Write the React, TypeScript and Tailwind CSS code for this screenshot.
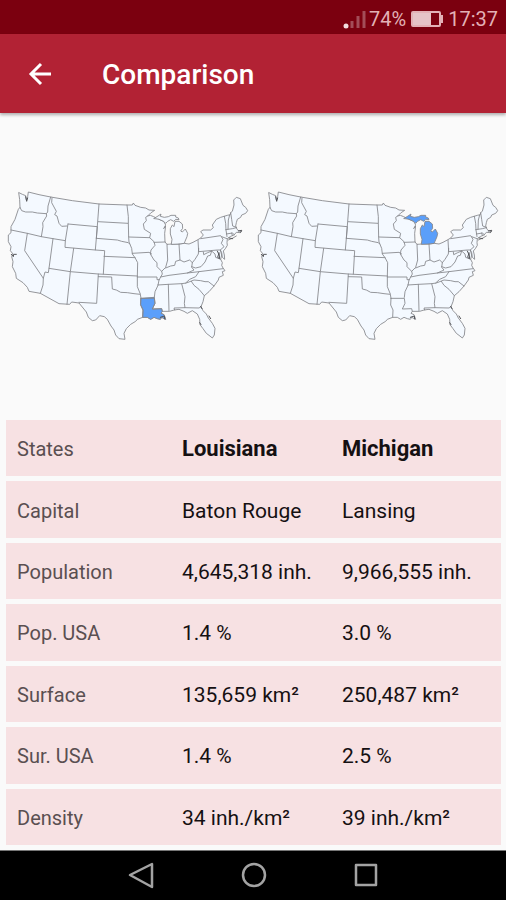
import React from 'react';

type StateCode = 'LA' | 'MI';

interface ComparisonRow {
  label: string;
  left: string;
  right: string;
}

const rows: ComparisonRow[] = [
  { label: 'Capital', left: 'Baton Rouge', right: 'Lansing' },
  { label: 'Population', left: '4,645,318 inh.', right: '9,966,555 inh.' },
  { label: 'Pop. USA', left: '1.4 %', right: '3.0 %' },
  { label: 'Surface', left: '135,659 km²', right: '250,487 km²' },
  { label: 'Sur. USA', left: '1.4 %', right: '2.5 %' },
  { label: 'Density', left: '34 inh./km²', right: '39 inh./km²' },
];

const COUNTRY =
  'M60 38L70 43L80 47L82 60L86 50L88 36L120 44L155 51L220 62L300 72L384 75L400 75L403 69L408 76L425 82L440 84L450 90L467 91L455 99L446 108L454 106L464 110L480 118L494 124L500 135L494 146L500 138L497 160L498 186L504 193L518 192L540 192L556 190L570 192L582 187L595 180L605 174L613 165L605 155L612 150L635 150L643 143L640 135L652 118L665 112L685 106L694 104L695 98L700 94L705 75L704 60L712 52L724 56L732 76L740 82L746 92L740 100L728 105L725 112L715 118L712 128L710 138L714 148L720 153L728 152L724 158L712 157L705 165L695 169L685 176L684 188L685 196L679 206L673 213L676 225L677 238L670 232L668 218L664 210L668 225L665 238L670 248L668 256L672 264L678 272L670 275L673 286L660 292L658 300L645 318L630 335L616 347L612 365L606 380L612 392L622 402L628 414L640 430L648 445L646 465L640 474L630 466L622 460L612 446L603 434L602 418L595 402L580 392L565 400L555 394L540 388L525 390L512 394L490 394L486 400L495 404L500 418L488 412L484 418L475 416L465 412L455 418L445 412L431 412L415 418L410 424L395 433L382 446L375 460L378 478L360 476L350 465L345 450L336 438L325 418L316 410L302 407L290 420L280 422L268 412L262 396L240 369L218 366L212 373L180 371L124 340L90 334L85 322L72 308L52 295L50 280L40 260L42 245L38 230L42 222L34 212L36 200L28 185L28 165L36 158L36 140L48 118L58 88L63 82L62 60Z';

const UPPER_MICHIGAN =
  'M465 115L474 110L486 102L484 109L496 112L508 110L516 106L530 106L530 111L538 114L540 119L530 118L524 124L515 119L506 124L500 130L494 124L480 118Z';

const LOWER_MICHIGAN =
  'M517 192L519 178L514 162L514 146L520 135L525 140L528 124L540 124L550 132L551 145L545 153L550 156L559 147L566 160L564 170L558 184L556 190L540 192Z';

const LOUISIANA =
  'M426 355L466 352L468 370L460 387L488 386L490 394L486 400L495 404L500 418L488 412L484 418L475 416L465 412L455 418L445 412L431 412L432 390L425 375Z';

// Inner borders, roughly from the Pacific to the Atlantic
const borders: string[] = [
  'M63 82L68 92L80 96L100 96L115 99L142 101',
  'M155 51L147 78L146 96L142 101L143 108L131 128L132 140L127 170',
  'M36 150L85 160L127 170L162 176L199 182',
  'M159 54L158 68L172 94L167 104L174 108L180 130L188 139L204 138',
  'M207 132L295 140L289 210L198 202L199 182L207 132',
  'M300 72L296 125L292 175',
  'M297 125L387 130',
  'M384 75L388 110L388 130L389 172L390 186L398 205L400 222L408 233L416 248L415 288L415 320L424 342',
  'M292 175L355 180L368 184L388 188L392 192',
  'M389 171L452 173',
  'M289 210L317 212L313 282',
  'M315 229L408 233',
  'M224 205L214 275L204 373',
  'M150 265L214 275L298 282L415 288',
  'M85 160L77 212L133 295L132 315L124 340',
  'M162 176L150 265L148 278L138 276L133 295',
  'M298 282L293 370L240 367',
  'M298 290L338 291L340 327L352 330L365 337L385 338L405 341L424 343L426 355',
  'M446 108L440 112L442 122L433 132L436 148L455 160L452 173L465 185L468 196L456 210L454 222L465 240L474 248L474 260L488 274L490 282L480 300L477 316L468 335L466 352',
  'M400 220L450 217L458 222',
  'M465 187L498 186',
  'M415 291L474 291L474 299L481 299',
  'M426 355L466 355L468 370L460 387L488 386L490 394',
  'M426 355L425 375L432 390L431 412',
  'M504 193L506 240L500 262L488 274',
  'M540 192L543 240L530 244L527 256L515 258L500 264',
  'M543 240L555 246L572 240L580 248L578 262L585 270L565 279',
  'M485 291L510 286L565 279L600 275L672 266',
  'M476 315L508 313L548 311L562 309L585 300L605 302L618 305L628 305L645 318',
  'M560 309L572 298L590 290L600 275',
  'M508 313L510 392',
  'M548 311L558 350L556 370L558 383L525 384L527 390',
  'M558 383L600 384L606 380',
  'M577 304L585 316L600 328L616 347',
  'M597 180L599 215L655 210L664 210',
  'M599 205L598 222L588 238L580 248',
  'M613 216L614 224L626 218L638 213L634 226L626 228L618 246L606 260L590 264L578 260',
  'M638 213L648 222L650 232L665 238',
  'M605 176L665 167L672 178L667 190L675 200L664 210',
  'M668 170L684 176',
  'M676 109L680 130L681 150L684 170',
  'M692 105L688 120L687 148',
  'M695 98L698 118L701 138L712 142',
  'M680 149L700 146L712 143',
  'M682 162L700 159L706 164',
  'M698 159L700 166',
  'M688 180L700 175L712 168',
];

const details: string[] = [
  'M80 50L83 64L86 54',
  'M37 223L43 230L44 223L52 223',
  'M655 213L659 222L656 232L662 236L660 218',
  'M690 174L701 176',
  'M718 153L728 151L725 157',
  'M605 379L609 386',
  'M630 408L635 416',
  'M602 428L606 434',
  'M484 412L496 408L497 417',
];

const UsMap: React.FC<{ highlight: StateCode; title: string }> = ({ highlight, title }) => (
  <svg viewBox="9 0 750 510" className="w-full" role="img" aria-label={title} strokeLinejoin="round" strokeLinecap="round">
    <g fill="#f4f9ff" stroke="#85878b" strokeWidth="2.6">
      <path d={COUNTRY} />
      <path d={UPPER_MICHIGAN} fill={highlight === 'MI' ? '#5b9ffa' : '#f4f9ff'} />
      <path d="M501 134L514 128L512 190L501 188Z" fill="#fafafa" stroke="none" />
      <path d={LOWER_MICHIGAN} fill={highlight === 'MI' ? '#5b9ffa' : '#f4f9ff'} />
      {highlight === 'LA' && <path d={LOUISIANA} fill="#5b9ffa" />}
    </g>
    <g fill="none" stroke="#85878b" strokeWidth="2.6">
      {borders.map(d => (
        <path key={d} d={d} />
      ))}
    </g>
    <g fill="none" stroke="#55565a" strokeWidth="3">
      {details.map(d => (
        <path key={d} d={d} />
      ))}
    </g>
  </svg>
);

const StatusBar: React.FC = () => (
  <div className="flex h-[34px] items-center justify-end bg-[#7b000f] pt-1 pr-2 text-[20px] leading-6 text-[#e3b1b6]">
    <svg viewBox="0 0 24 20" className="h-5 w-6" aria-hidden="true">
      <circle cx="3" cy="17" r="2.5" fill="#f3dcde" />
      <path d="M9 12v7M15 7v12M21 2v17" stroke="#a34d58" strokeWidth="3" />
    </svg>
    <span className="ml-0.5">74%</span>
    <svg viewBox="0 0 34 18" className="mx-1 h-[18px] w-[34px]" aria-hidden="true">
      <rect x="2" y="2" width="28" height="14" rx="1" fill="#7b000f" stroke="#e3b1b6" strokeWidth="2" />
      <rect x="3" y="3" width="18" height="12" fill="#e6c3c7" />
      <path d="M31 5h2v8h-2z" fill="#e3b1b6" />
    </svg>
    <span>17:37</span>
  </div>
);

const AppBar: React.FC = () => (
  <header className="relative flex h-[79px] items-center bg-[#b22234] pl-6 shadow-[0_2px_3px_rgba(0,0,0,0.3)]">
    <button className="flex h-8 w-8 items-center justify-center" aria-label="Back">
      <svg viewBox="0 0 24 24" className="h-6 w-6" fill="none" stroke="#fff" strokeWidth="3" aria-hidden="true">
        <path d="M23 12H3M13 2L3 12L13 22" />
      </svg>
    </button>
    <h1 className="ml-[46px] pt-0.5 text-[28px] leading-8 font-medium text-white">Comparison</h1>
  </header>
);

const ComparisonTable: React.FC = () => (
  <table className="h-[435px] w-full table-fixed border-separate border-spacing-x-0 border-spacing-y-[5px] text-left text-[21px] leading-7 text-[#151012]">
    <colgroup>
      <col className="w-1/3" />
      <col className="w-[160px]" />
      <col />
    </colgroup>
    <tbody>
      <tr className="bg-[#f7e1e3]">
        <th scope="col" className="pt-0.5 pl-[11px] text-xl font-normal text-[#5a4f51]">States</th>
        <th scope="col" className="pt-0.5 pl-[11px] text-[22px] font-bold">Louisiana</th>
        <th scope="col" className="pt-0.5 pl-[11px] text-[22px] font-bold">Michigan</th>
      </tr>
      {rows.map(row => (
        <tr key={row.label} className="bg-[#f7e1e3]">
          <th scope="row" className="pt-0.5 pl-[11px] text-xl font-normal text-[#5a4f51]">{row.label}</th>
          <td className="pt-0.5 pl-[11px] whitespace-nowrap">{row.left}</td>
          <td className="pt-0.5 pl-[11px] whitespace-nowrap">{row.right}</td>
        </tr>
      ))}
    </tbody>
  </table>
);

const NavigationBar: React.FC = () => (
  <nav className="flex h-[50px] items-center justify-center gap-20 border-t border-[#777] bg-black pl-0.5">
    <button className="h-8 w-8" aria-label="Back">
      <svg viewBox="0 0 32 32" fill="none" stroke="#a3a3a3" strokeWidth="2.5" strokeLinejoin="round">
        <path d="M26 4V27L4 15Z" />
      </svg>
    </button>
    <button className="h-8 w-8" aria-label="Home">
      <svg viewBox="0 0 32 32" fill="none" stroke="#a3a3a3" strokeWidth="2.5">
        <circle cx="16" cy="15" r="11" />
      </svg>
    </button>
    <button className="h-8 w-8" aria-label="Recent apps">
      <svg viewBox="0 0 32 32" fill="none" stroke="#a3a3a3" strokeWidth="2.5" strokeLinejoin="round">
        <rect x="6" y="5" width="20" height="20" />
      </svg>
    </button>
  </nav>
);

const App: React.FC = () => (
  <div className="flex min-h-screen flex-col bg-[#fafafa] font-['Roboto',sans-serif]">
    <StatusBar />
    <AppBar />
    <main className="flex flex-1 flex-col">
      <div className="grid flex-1 grid-cols-2 items-start pt-[67px] pr-1 pl-0.5">
        <UsMap highlight="LA" title="Louisiana on the map of the USA" />
        <UsMap highlight="MI" title="Michigan on the map of the USA" />
      </div>
      <div className="pr-[5px] pl-1.5">
        <ComparisonTable />
      </div>
    </main>
    <NavigationBar />
  </div>
);

export default App;
